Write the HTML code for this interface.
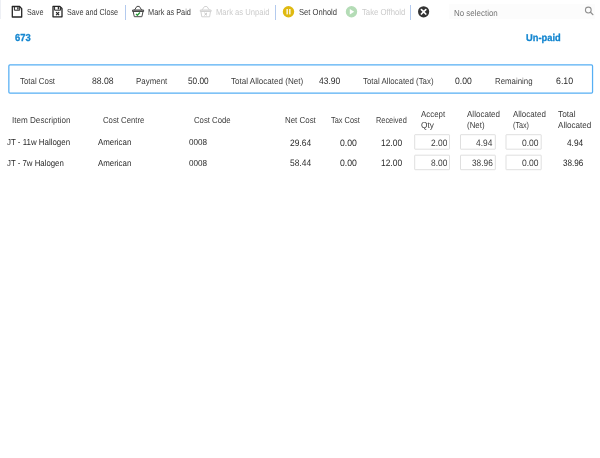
<!DOCTYPE html>
<html><head><meta charset="utf-8"><title>Invoice 673</title>
<style>
html,body{margin:0;padding:0;background:#fff}
body{width:600px;height:458px;position:relative;overflow:hidden;font-family:"Liberation Sans",sans-serif}
.t{filter:blur(0.28px);position:absolute;white-space:pre;line-height:12px;transform-origin:0 0;text-rendering:geometricPrecision;font-family:"Liberation Sans",sans-serif}
.sep{position:absolute;top:5px;width:1px;height:14.5px;background:#b3caee}
.abs{position:absolute}
</style></head><body>
<div class="toolbar">
<div class="abs" style="left:0;top:0;width:1px;height:19px;background:#eef0f5"></div>
<!-- toolbar icons -->
<svg class="abs" style="left:0;top:0" width="600" height="24" viewBox="0 0 600 24">
  <!-- save -->
  <g fill="none" stroke="#262626" stroke-width="1.3" stroke-linejoin="round">
    <path d="M12.3 6.5 H19.6 L21.7 8.6 V17 H12.3 Z"/>
    <path d="M14.4 6.5 V10.2 H19.7 V6.8" stroke-width="1"/>
    <path d="M17.9 7.2 V9.4" stroke-width="1.4"/>
  </g>
  <!-- save and close -->
  <g fill="none" stroke="#262626" stroke-width="1.3" stroke-linejoin="round">
    <path d="M53 6.4 H59.9 L62 8.5 V16.8 H53 Z"/>
    <path d="M54.6 6.4 V10.2 H60.6 V7.2" stroke-width="1"/>
    <path d="M58.5 7 V9.4" stroke-width="1.5"/>
    <path d="M56.1 12.1 L59.1 15.1 M59.1 12.1 L56.1 15.1" stroke-width="1.25"/>
  </g>
  <!-- basket paid -->
  <g fill="none" stroke="#484848" stroke-width="1" stroke-linejoin="round">
    <path d="M134.5 10 L136.9 6.4 H139.3 L141.7 10"/>
    <path d="M132.6 10 H143.6 V11.5 H132.6 Z" fill="#9a9a9a"/>
    <path d="M133.2 11.5 L134.3 16.7 H141.9 L143 11.5"/>
    <path d="M136 13.9 L137.4 15.2 L139.9 12.5" stroke="#2a9a3a" stroke-width="1.3"/>
  </g>
  <!-- basket unpaid disabled -->
  <g fill="none" stroke="#d2d2d2" stroke-width="1" stroke-linejoin="round">
    <path d="M202 10 L204.5 6.5 H206.9 L209.4 10"/>
    <path d="M200.3 10 H211.1 V11.5 H200.3 Z" fill="#e8e8e8"/>
    <path d="M200.9 11.5 L201.8 16.8 H209.6 L210.5 11.5"/>
    <path d="M204.4 12.8 L207 15.4 M207 12.8 L204.4 15.4" stroke="#c4c4c4"/>
  </g>
  <!-- onhold -->
  <circle cx="288.5" cy="11.7" r="5.7" fill="#dfb911"/>
  <rect x="286.5" y="9" width="1.3" height="5.4" fill="#fff"/>
  <rect x="289.2" y="9" width="1.3" height="5.4" fill="#fff"/>
  <!-- offhold disabled -->
  <circle cx="351.5" cy="11.7" r="5.7" fill="#b4dcb6"/>
  <path d="M349.8 9 L354.2 11.7 L349.8 14.4 Z" fill="#fff"/>
  <!-- close -->
  <circle cx="423.6" cy="11.8" r="5.6" fill="#333"/>
  <path d="M421.4 9.6 L425.8 14 M425.8 9.6 L421.4 14" stroke="#fff" stroke-width="1.7" stroke-linecap="round"/>
</svg>
<div class="sep" style="left:125px"></div>
<div class="sep" style="left:275px"></div>
<div class="sep" style="left:410px"></div>
<!-- search box -->
<div class="abs" style="left:449.4px;top:4.4px;width:145.6px;height:15px;background:#fcfcfc"></div>
<svg class="abs" style="left:580px;top:4px" width="18" height="16" viewBox="580 4 18 16">
  <circle cx="588.3" cy="10" r="2.9" fill="none" stroke="#909090" stroke-width="1.05"/>
  <path d="M590.5 12.2 L592.9 14.6" stroke="#909090" stroke-width="1.3" stroke-linecap="round"/>
</svg>
<span class="t" style="left:26.65px;top:6px;font-size:8.7px;transform:scaleX(0.8332);color:#3c3c3c">Save</span>
<span class="t" style="left:67.45px;top:6px;font-size:8.7px;transform:scaleX(0.8331);color:#3c3c3c">Save and Close</span>
<span class="t" style="left:148.34px;top:6px;font-size:8.7px;transform:scaleX(0.8464);color:#3c3c3c">Mark as Paid</span>
<span class="t" style="left:215.53px;top:6px;font-size:8.7px;transform:scaleX(0.8782);color:#cbcbcb">Mark as Unpaid</span>
<span class="t" style="left:298.83px;top:6px;font-size:8.7px;transform:scaleX(0.8749);color:#3c3c3c">Set Onhold</span>
<span class="t" style="left:361.93px;top:6px;font-size:8.7px;transform:scaleX(0.8914);color:#cbcbcb">Take Offhold</span>
<span class="t" style="left:454.12px;top:7px;font-size:8.7px;transform:scaleX(0.9152);color:#747474">No selection</span>
</div>
<div class="titles">
<span class="t" style="left:14.77px;top:33px;font-size:10.2px;transform:scaleX(0.9210);color:#1486d0;font-weight:bold;-webkit-text-stroke:0.3px #1486d0">673</span>
<span class="t" style="left:525.67px;top:33px;font-size:10.0px;transform:scaleX(0.9310);color:#1486d0;font-weight:bold;-webkit-text-stroke:0.3px #1486d0">Un-paid</span>
</div>
<div class="summary">
<!-- summary panel -->
<svg class="abs" style="left:0;top:60px" width="600" height="40" viewBox="0 60 600 40">
  <rect x="8.85" y="64.85" width="583.7" height="28.2" rx="1.1" ry="1.1" fill="#fff" stroke="#56aff4" stroke-width="1.25"/>
</svg>
<span class="t" style="left:19.72px;top:75px;font-size:8.7px;transform:scaleX(0.9071);color:#3c3c3c">Total Cost</span>
<span class="t" style="left:91.70px;top:75px;font-size:9.4px;transform:scaleX(0.9206);color:#2a2a2a">88.08</span>
<span class="t" style="left:135.72px;top:75px;font-size:8.7px;transform:scaleX(0.9113);color:#3c3c3c">Payment</span>
<span class="t" style="left:188.01px;top:75px;font-size:9.4px;transform:scaleX(0.8768);color:#2a2a2a">50.00</span>
<span class="t" style="left:231.42px;top:75px;font-size:8.7px;transform:scaleX(0.9282);color:#3c3c3c">Total Allocated (Net)</span>
<span class="t" style="left:319.00px;top:75px;font-size:9.4px;transform:scaleX(0.9075);color:#2a2a2a">43.90</span>
<span class="t" style="left:363.02px;top:75px;font-size:8.7px;transform:scaleX(0.9074);color:#3c3c3c">Total Allocated (Tax)</span>
<span class="t" style="left:455.40px;top:75px;font-size:9.4px;transform:scaleX(0.9152);color:#2a2a2a">0.00</span>
<span class="t" style="left:494.72px;top:75px;font-size:8.7px;transform:scaleX(0.9042);color:#3c3c3c">Remaining</span>
<span class="t" style="left:555.69px;top:75px;font-size:9.4px;transform:scaleX(0.9379);color:#2a2a2a">6.10</span>
</div>
<div class="grid">
<div class="grid-head">
<span class="t" style="left:12.22px;top:114px;font-size:8.7px;transform:scaleX(0.9331);color:#3c3c3c">Item Description</span>
<span class="t" style="left:103.48px;top:114px;font-size:8.7px;transform:scaleX(0.8907);color:#3c3c3c">Cost Centre</span>
<span class="t" style="left:194.23px;top:114px;font-size:8.7px;transform:scaleX(0.8903);color:#3c3c3c">Cost Code</span>
<span class="t" style="left:285.22px;top:114px;font-size:8.7px;transform:scaleX(0.9115);color:#3c3c3c">Net Cost</span>
<span class="t" style="left:330.99px;top:114px;font-size:8.7px;transform:scaleX(0.8512);color:#3c3c3c">Tax Cost</span>
<span class="t" style="left:376.49px;top:114px;font-size:8.7px;transform:scaleX(0.8495);color:#3c3c3c">Received</span>
<span class="t" style="left:421.42px;top:108px;font-size:8.7px;transform:scaleX(0.9093);color:#3c3c3c">Accept</span>
<span class="t" style="left:421.41px;top:119px;font-size:8.7px;transform:scaleX(0.9530);color:#3c3c3c">Qty</span>
<span class="t" style="left:466.72px;top:108px;font-size:8.7px;transform:scaleX(0.9248);color:#3c3c3c">Allocated</span>
<span class="t" style="left:466.72px;top:119px;font-size:8.7px;transform:scaleX(0.9089);color:#3c3c3c">(Net)</span>
<span class="t" style="left:512.72px;top:108px;font-size:8.7px;transform:scaleX(0.9192);color:#3c3c3c">Allocated</span>
<span class="t" style="left:512.75px;top:119px;font-size:8.7px;transform:scaleX(0.8287);color:#3c3c3c">(Tax)</span>
<span class="t" style="left:557.71px;top:108px;font-size:8.7px;transform:scaleX(0.9577);color:#3c3c3c">Total</span>
<span class="t" style="left:557.72px;top:119px;font-size:8.7px;transform:scaleX(0.9334);color:#3c3c3c">Allocated</span>
</div>
<!-- inputs -->
<svg class="abs" style="left:400px;top:130px" width="200" height="45" viewBox="400 130 200 45">
  <rect x="414.7" y="134.7" width="34.8" height="14.5" rx="0.4" fill="#fff" stroke="#dfdfdf" stroke-width="1"/>
  <rect x="460.5" y="134.7" width="34.8" height="14.5" rx="0.4" fill="#fff" stroke="#dfdfdf" stroke-width="1"/>
  <rect x="506.0" y="134.7" width="35.2" height="14.5" rx="0.4" fill="#fff" stroke="#dfdfdf" stroke-width="1"/>
  <rect x="414.7" y="155.2" width="34.8" height="14.5" rx="0.4" fill="#fff" stroke="#dfdfdf" stroke-width="1"/>
  <rect x="460.5" y="155.2" width="34.8" height="14.5" rx="0.4" fill="#fff" stroke="#dfdfdf" stroke-width="1"/>
  <rect x="506.0" y="155.2" width="35.2" height="14.5" rx="0.4" fill="#fff" stroke="#dfdfdf" stroke-width="1"/>
</svg>
<div class="grid-row">
<span class="t" style="left:7.22px;top:136px;font-size:8.7px;transform:scaleX(0.9109);color:#2a2a2a">JT - 11w Hallogen</span>
<span class="t" style="left:97.97px;top:136px;font-size:8.7px;transform:scaleX(0.9073);color:#2a2a2a">American</span>
<span class="t" style="left:188.97px;top:136px;font-size:8.7px;transform:scaleX(0.9349);color:#2a2a2a">0008</span>
<span class="t" style="left:289.70px;top:137px;font-size:9.4px;transform:scaleX(0.8987);color:#2a2a2a">29.64</span>
<span class="t" style="left:339.70px;top:137px;font-size:9.4px;transform:scaleX(0.9237);color:#2a2a2a">0.00</span>
<span class="t" style="left:380.95px;top:137px;font-size:9.4px;transform:scaleX(0.8987);color:#2a2a2a">12.00</span>
<span class="t" style="left:431.01px;top:137px;font-size:9.4px;transform:scaleX(0.8925);color:#3a3a3a">2.00</span>
<span class="t" style="left:476.21px;top:137px;font-size:9.4px;transform:scaleX(0.8925);color:#3a3a3a">4.94</span>
<span class="t" style="left:521.70px;top:137px;font-size:9.4px;transform:scaleX(0.9095);color:#3a3a3a">0.00</span>
<span class="t" style="left:566.91px;top:137px;font-size:9.4px;transform:scaleX(0.8868);color:#1c1c1c">4.94</span>
</div>
<div class="grid-row">
<span class="t" style="left:7.23px;top:157px;font-size:8.7px;transform:scaleX(0.9000);color:#2a2a2a">JT - 7w Halogen</span>
<span class="t" style="left:97.97px;top:157px;font-size:8.7px;transform:scaleX(0.9073);color:#2a2a2a">American</span>
<span class="t" style="left:188.97px;top:157px;font-size:8.7px;transform:scaleX(0.9349);color:#2a2a2a">0008</span>
<span class="t" style="left:289.70px;top:157px;font-size:9.4px;transform:scaleX(0.8987);color:#2a2a2a">58.44</span>
<span class="t" style="left:339.70px;top:157px;font-size:9.4px;transform:scaleX(0.9237);color:#2a2a2a">0.00</span>
<span class="t" style="left:380.95px;top:157px;font-size:9.4px;transform:scaleX(0.8987);color:#2a2a2a">12.00</span>
<span class="t" style="left:431.01px;top:157px;font-size:9.4px;transform:scaleX(0.8925);color:#3a3a3a">8.00</span>
<span class="t" style="left:471.71px;top:157px;font-size:9.4px;transform:scaleX(0.8855);color:#3a3a3a">38.96</span>
<span class="t" style="left:521.70px;top:157px;font-size:9.4px;transform:scaleX(0.9095);color:#3a3a3a">0.00</span>
<span class="t" style="left:562.71px;top:157px;font-size:9.4px;transform:scaleX(0.8680);color:#1c1c1c">38.96</span>
</div>
</div>

</body></html>
